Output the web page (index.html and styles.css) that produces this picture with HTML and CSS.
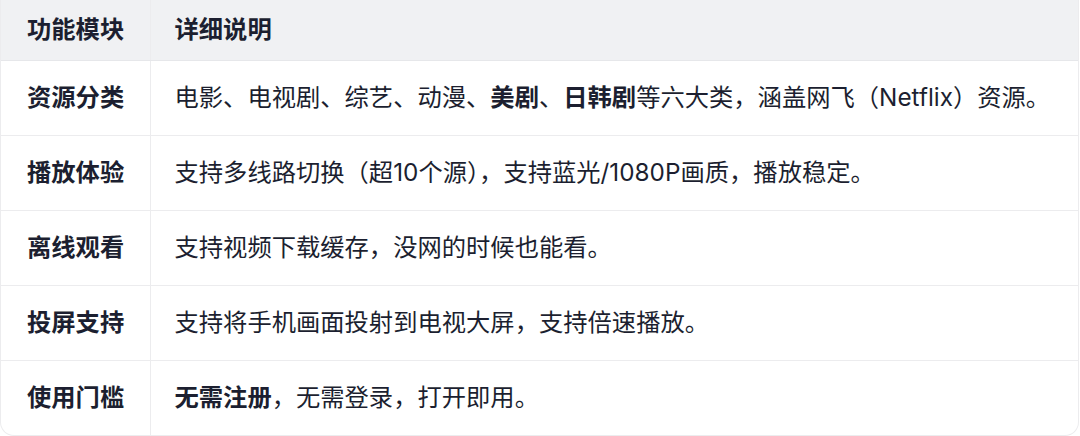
FILE: index.html
```html
<!DOCTYPE html>
<html lang="zh-CN">
<head>
    <meta charset="UTF-8">
    <meta name="viewport" content="width=device-width, initial-scale=1.0">
    <title>功能模块</title>
    <link rel="stylesheet" href="styles.css">
</head>
<body>
    <div class="table-wrap">
        <table class="feature-table">
            <thead>
                <tr>
                    <th class="col-name">功能模块</th>
                    <th>详细说明</th>
                </tr>
            </thead>
            <tbody>
                <tr>
                    <td class="col-name">资源分类</td>
                    <td>电影、电视剧、综艺、动漫、<b>美剧</b>、<b>日韩剧</b>等六大类，涵盖网飞（Netflix）资源。</td>
                </tr>
                <tr>
                    <td class="col-name">播放体验</td>
                    <td>支持多线路切换（超10个源），支持蓝光/1080P画质，播放稳定。</td>
                </tr>
                <tr>
                    <td class="col-name">离线观看</td>
                    <td>支持视频下载缓存，没网的时候也能看。</td>
                </tr>
                <tr>
                    <td class="col-name">投屏支持</td>
                    <td>支持将手机画面投射到电视大屏，支持倍速播放。</td>
                </tr>
                <tr>
                    <td class="col-name">使用门槛</td>
                    <td><b>无需注册</b>，无需登录，打开即用。</td>
                </tr>
            </tbody>
        </table>
    </div>
</body>
</html>
```

FILE: styles.css
```css
* { margin: 0; padding: 0; box-sizing: border-box; }
body {
    font-family: "Inter", "Noto Sans CJK SC", sans-serif;
    background: #fff;
    color: #1c1f30;
    width: 1080px;
    height: 436px;
    overflow: hidden;
}
.table-wrap {
    width: 1079px;
    border: 1px solid #ececee;
    border-top: none;
    border-radius: 0 0 14px 14px;
    overflow: hidden;
}
.feature-table {
    width: 100%;
    border-collapse: collapse;
    font-size: 24.3px;
}
.feature-table th,
.feature-table td {
    text-align: left;
    padding: 0 24px;
    white-space: nowrap;
}
.feature-table th {
    height: 60px;
    padding-bottom: 4px;
    background: #f0f1f3;
    font-weight: 700;
    border-bottom: 1px solid #e6e7ea;
}
.feature-table td {
    height: 75px;
    padding-bottom: 4px;
    border-top: 1px solid #ececee;
    font-weight: 400;
}
.feature-table .col-name {
    width: 149px;
    padding-left: 26px;
    border-right: 1px solid #ececee;
    font-weight: 700;
}
.feature-table b { font-weight: 700; }
.feature-table tbody tr:first-child td { border-top: none; }
```
